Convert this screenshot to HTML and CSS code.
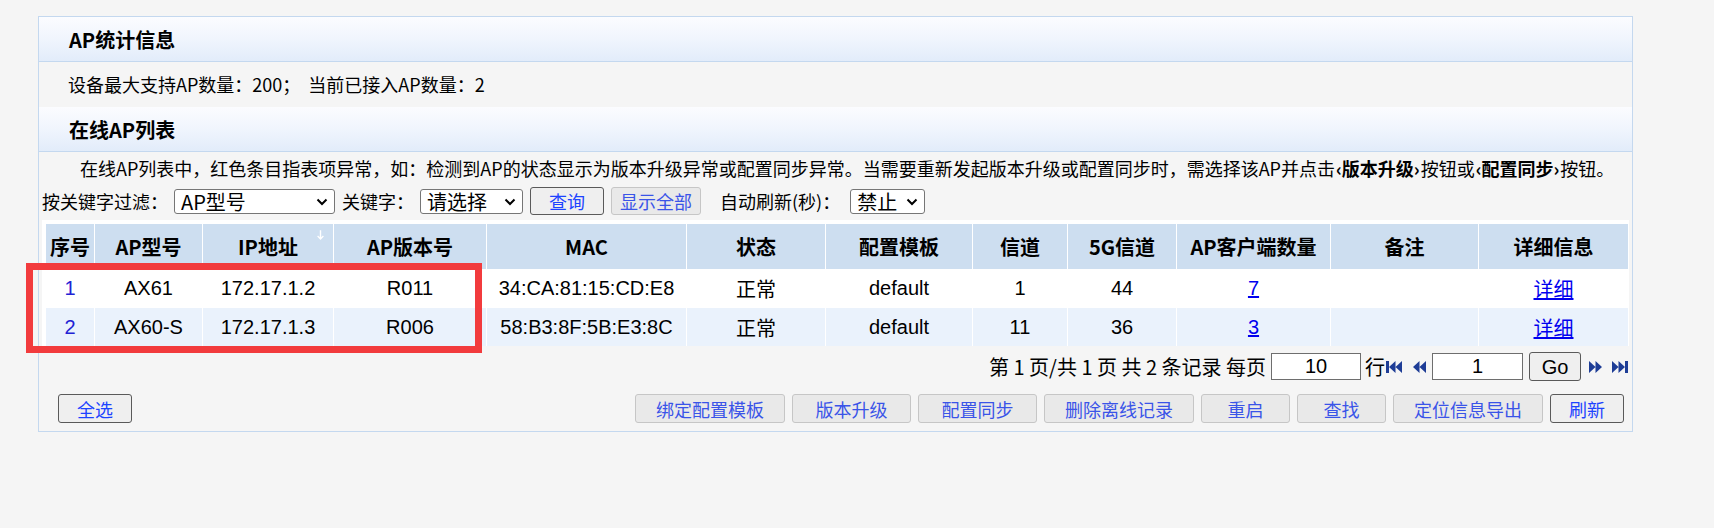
FILE: index.html
```html
<!DOCTYPE html>
<html lang="zh-CN">
<head>
<meta charset="UTF-8">
<meta name="viewport" content="width=device-width, initial-scale=1.0">
<title>在线AP列表</title>
<link rel="stylesheet" href="styles.css">
</head>
<body>
<div class="panel">
    <div class="section-title">AP统计信息</div>
    <div class="info-row">设备最大支持AP数量：200；&nbsp; 当前已接入AP数量：2</div>
    <div class="section-title">在线AP列表</div>
    <div class="content">
        <p class="notice">在线AP列表中，红色条目指表项异常，如：检测到AP的状态显示为版本升级异常或配置同步异常。当需要重新发起版本升级或配置同步时，需选择该AP并点击<b>‹版本升级›</b>按钮或<b>‹配置同步›</b>按钮。</p>
        <div class="filter-row">
            <span class="label">按关键字过滤：</span>
            <span class="select-box select-type">
                <select class="select"><option>AP型号</option></select>
                <svg class="chevron" viewBox="0 0 12 8"><path d="M1.5 1.5 6 6l4.5-4.5"/></svg>
            </span>
            <span class="label label-key">关键字：</span>
            <span class="select-box select-key">
                <select class="select"><option>请选择</option></select>
                <svg class="chevron" viewBox="0 0 12 8"><path d="M1.5 1.5 6 6l4.5-4.5"/></svg>
            </span>
            <button class="btn btn-query">查询</button>
            <button class="btn btn-off btn-show">显示全部</button>
            <span class="label label-refresh">自动刷新(秒)：</span>
            <span class="select-box select-refresh">
                <select class="select"><option>禁止</option></select>
                <svg class="chevron" viewBox="0 0 12 8"><path d="M1.5 1.5 6 6l4.5-4.5"/></svg>
            </span>
        </div>
        <table class="ap-table">
            <colgroup>
                <col style="width:48px"><col style="width:107px"><col style="width:130px"><col style="width:152px">
                <col style="width:199px"><col style="width:138px"><col style="width:146px"><col style="width:94px">
                <col style="width:108px"><col style="width:153px"><col style="width:147px"><col style="width:149px">
            </colgroup>
            <thead>
                <tr>
                    <th>序号</th>
                    <th>AP型号</th>
                    <th class="sorted">IP地址
                        <svg class="sort-arrow" viewBox="0 0 8 12"><path d="M3.2 0h1.6v8l2-2 1 1-3.8 4-3.8-4 1-1 2 2z"/></svg>
                    </th>
                    <th>AP版本号</th>
                    <th>MAC</th>
                    <th>状态</th>
                    <th>配置模板</th>
                    <th>信道</th>
                    <th>5G信道</th>
                    <th>AP客户端数量</th>
                    <th>备注</th>
                    <th>详细信息</th>
                </tr>
            </thead>
            <tbody>
                <tr>
                    <td class="index">1</td>
                    <td>AX61</td>
                    <td>172.17.1.2</td>
                    <td>R011</td>
                    <td>34:CA:81:15:CD:E8</td>
                    <td>正常</td>
                    <td>default</td>
                    <td>1</td>
                    <td>44</td>
                    <td><a href="#">7</a></td>
                    <td></td>
                    <td><a href="#">详细</a></td>
                </tr>
                <tr class="alt">
                    <td class="index">2</td>
                    <td>AX60-S</td>
                    <td>172.17.1.3</td>
                    <td>R006</td>
                    <td>58:B3:8F:5B:E3:8C</td>
                    <td>正常</td>
                    <td>default</td>
                    <td>11</td>
                    <td>36</td>
                    <td><a href="#">3</a></td>
                    <td></td>
                    <td><a href="#">详细</a></td>
                </tr>
            </tbody>
        </table>
        <div class="pager">
            <span class="pager-text">第 1 页/共 1 页 共 2 条记录 每页</span>
            <input class="page-input" type="text" value="10">
            <span class="pager-unit">行</span>
            <svg class="pager-icon first" viewBox="0 0 16 14"><rect x="0" y="1" width="3" height="12"/><path d="M3 7 9.5 1v12zM9.5 7 16 1v12z"/></svg>
            <svg class="pager-icon prev" viewBox="0 0 13 14"><path d="M0 7 6.5 1v12zM6.5 7 13 1v12z"/></svg>
            <input class="page-input page-no" type="text" value="1">
            <button class="btn btn-go">Go</button>
            <svg class="pager-icon next" viewBox="0 0 13 14"><path d="M13 7 6.5 1v12zM6.5 7 0 1v12z"/></svg>
            <svg class="pager-icon last" viewBox="0 0 16 14"><rect x="13" y="1" width="3" height="12"/><path d="M13 7 6.5 1v12zM6.5 7 0 1v12z"/></svg>
        </div>
        <div class="action-row">
            <button class="btn btn-select-all">全选</button>
            <div class="action-group">
                <button class="btn btn-off w-long">绑定配置模板</button>
                <button class="btn btn-off w-mid">版本升级</button>
                <button class="btn btn-off w-mid">配置同步</button>
                <button class="btn btn-off w-long">删除离线记录</button>
                <button class="btn btn-off w-short">重启</button>
                <button class="btn btn-off w-short">查找</button>
                <button class="btn btn-off w-long">定位信息导出</button>
                <button class="btn btn-refresh">刷新</button>
            </div>
        </div>
    </div>
    <div class="error-mark"></div>
</div>
</body>
</html>
```

FILE: styles.css
```css
* {
    box-sizing: border-box;
}

body {
    margin: 0;
    background-color: #f5f5f5;
    font-family: "Noto Sans CJK SC", sans-serif;
    font-size: 18px;
    color: #000;
}

.panel {
    position: relative;
    width: 1595px;
    margin: 16px 0 0 38px;
    border: 1px solid #c4d8ef;
}

.section-title {
    height: 45px;
    line-height: 46px;
    padding-left: 30px;
    font-size: 20px;
    font-weight: bold;
    border-bottom: 1px solid #c4d8ef;
    background: linear-gradient(to bottom, #fbfcff 0%, #f0f5fd 50%, #e2ecfa 100%);
}

.info-row {
    height: 45px;
    line-height: 45px;
    padding-left: 29px;
}

.content {
    padding: 0 0 8px 3px;
}

.notice {
    margin: 0;
    height: 30px;
    line-height: 32px;
    text-indent: 38px;
    white-space: nowrap;
    word-spacing: 0;
}

.notice b {
    font-weight: bold;
    padding: 0 1px;
}

.filter-row {
    display: flex;
    align-items: center;
    height: 38px;
}

.label {
    white-space: nowrap;
}

.label-key {
    margin-left: 7px;
}

.label-refresh {
    margin-left: 19px;
}

.select-box {
    position: relative;
    display: block;
    height: 25px;
    margin-left: 6px;
}

.select {
    -webkit-appearance: none;
    appearance: none;
    display: block;
    width: 100%;
    height: 25px;
    margin: 0;
    padding: 0 20px 0 6px;
    font-family: "Noto Sans CJK SC", sans-serif;
    font-size: 20px;
    line-height: 23px;
    color: #000;
    background-color: #fff;
    border: 1px solid #767676;
    border-radius: 3px;
    outline: none;
}

.chevron {
    position: absolute;
    top: 9px;
    right: 7px;
    width: 12px;
    height: 8px;
    fill: none;
    stroke: #000;
    stroke-width: 2;
    pointer-events: none;
}

.select-type {
    width: 161px;
}

.select-key {
    width: 103px;
}

.select-refresh {
    width: 75px;
    margin-left: 10px;
}

.btn {
    height: 29px;
    padding: 0;
    font-family: "Noto Sans CJK SC", sans-serif;
    font-size: 18px;
    line-height: 26px;
    color: #1d44ff;
    background-color: #efefef;
    border: 1px solid #5a5a5a;
    border-radius: 3px;
    cursor: pointer;
}

.btn-off {
    color: #3a54e8;
    background-color: #e9e9e9;
    border-color: #c6c6c6;
}

.btn-query {
    width: 74px;
    height: 28px;
    margin-left: 7px;
}

.btn-show {
    width: 90px;
    height: 28px;
    margin-left: 7px;
}

.ap-table {
    margin-left: 0;
    border-collapse: separate;
    border-spacing: 1px 0;
    border-top: 4px solid #fff;
    border-left: 3px solid #fff;
    background-color: #fff;
    table-layout: fixed;
}

.ap-table th {
    position: relative;
    height: 45px;
    padding: 0;
    font-size: 20px;
    font-weight: bold;
    text-align: center;
    background-color: #cddef0;
}

.sort-arrow {
    position: absolute;
    top: 6px;
    right: 9px;
    width: 7px;
    height: 11px;
    fill: #fff;
}

.ap-table td {
    height: 39px;
    padding: 0;
    font-family: "Liberation Sans", "Noto Sans CJK SC", sans-serif;
    font-size: 20px;
    text-align: center;
    background-color: #fff;
}

.ap-table tr.alt td {
    height: 38px;
    background-color: #eaf2fc;
}

.ap-table td.index {
    color: #2222d4;
}

.ap-table td a {
    color: #0000ee;
    text-decoration: underline;
}

.pager {
    display: flex;
    justify-content: flex-end;
    align-items: center;
    height: 29px;
    margin-top: 6px;
    padding-right: 4px;
    font-size: 20px;
}

.pager-text {
    white-space: nowrap;
}

.page-input {
    width: 90px;
    height: 27px;
    margin-left: 5px;
    padding: 0;
    font-family: "Liberation Sans", sans-serif;
    font-size: 20px;
    text-align: center;
    border: 1px solid #6e6e6e;
    background-color: #fff;
}

.page-no {
    width: 91px;
    margin-left: 6px;
}

.pager-unit {
    margin-left: 4px;
}

.pager-icon {
    height: 14px;
    fill: #1e3d96;
}

.pager-icon.first {
    width: 16px;
    margin-left: 1px;
}

.pager-icon.prev {
    width: 13px;
    margin-left: 11px;
}

.pager-icon.next {
    width: 13px;
    margin-left: 8px;
}

.pager-icon.last {
    width: 16px;
    margin-left: 10px;
}

.btn-go {
    width: 52px;
    margin-left: 6px;
    font-family: "Liberation Sans", sans-serif;
    font-size: 20px;
    color: #000;
}

.action-row {
    display: flex;
    justify-content: space-between;
    align-items: center;
    margin-top: 13px;
    padding: 0 8px 0 16px;
}

.action-group {
    display: flex;
    gap: 7px;
}

.btn-select-all,
.btn-refresh {
    width: 74px;
}

.w-short {
    width: 89px;
}

.w-mid {
    width: 119px;
}

.w-long {
    width: 150px;
}

.error-mark {
    position: absolute;
    left: -13px;
    top: 246px;
    width: 456px;
    height: 90px;
    border: 7px solid #f23b3d;
}
```
